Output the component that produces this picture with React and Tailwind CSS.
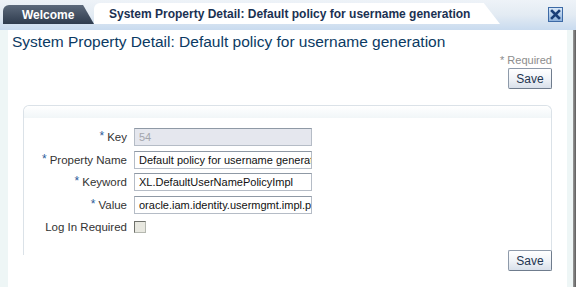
import React from "react";

const font = { fontFamily: "'Liberation Sans', Arial, sans-serif" };

const Req = () => <span className="text-[#2c5c9a] mr-[3px] text-[12px] relative top-[-1px]">*</span>;

const SaveButton = () => (
  <button className="w-[44px] h-[21px] border border-[#8e9aaa] border-b-[#6f7c8d] border-r-[#6f7c8d] rounded-[2px] bg-gradient-to-b from-[#ffffff] via-[#f1f4f8] to-[#d9e0ea] text-[12px] text-[#1f3550] leading-none">
    Save
  </button>
);

const Row = ({ label, required, children }) => (
  <div className="flex items-center h-[22.5px]">
    <div className="w-[122px] text-right text-[11.5px] text-[#333] pr-[7px] whitespace-nowrap">
      {required && <Req />}
      {label}
    </div>
    {children}
  </div>
);

const Input = ({ value, disabled }) => (
  <div
    className={`w-[178px] h-[18px] border border-[#b5bcc6] border-t-[#8f99a5] px-[4px] text-[11px] leading-[16px] whitespace-nowrap overflow-hidden ${
      disabled ? "bg-[#e5e7ee] text-[#a3a6ad]" : "bg-white text-[#111]"
    }`}
  >
    {value}
  </div>
);

export default function App() {
  return (
    <div className="w-[576px] h-[287px] bg-[#eef6f6] overflow-hidden relative" style={font}>
      {/* tab bar */}
      <div className="h-[30px] bg-gradient-to-b from-[#eef3f8] via-[#e3ebf3] to-[#c9dbef] relative">
        <div className="flex items-end h-[24px] ml-[3px] pt-[3px]">
          <div
            className="h-[19px] w-[91px] bg-gradient-to-b from-[#5d6a7c] to-[#2f3c4e] text-white font-bold text-[12px] flex items-center pl-[19px] whitespace-nowrap"
            style={{ clipPath: "polygon(0 0, 88% 0, 100% 100%, 0 100%)", borderTopLeftRadius: 6 }}
          >
            Welcome
          </div>
          <div
            className="h-[21px] w-[406px] bg-white text-[#1b3152] font-bold text-[12px] flex items-center pl-[15px] whitespace-nowrap"
            style={{ clipPath: "polygon(0 0, 96% 0, 100% 100%, 0 100%)", borderTopLeftRadius: 6 }}
          >
            System Property Detail: Default policy for username generation
          </div>
        </div>
        <div className="absolute right-[13px] top-[7px] w-[15px] h-[15px] border border-[#3d6aa6] bg-gradient-to-b from-[#d9e8f8] to-[#8fb2dc] flex items-center justify-center">
          <svg width="11" height="11" viewBox="0 0 11 11">
            <path d="M2 2 L9 9 M9 2 L2 9" stroke="#1a3e78" strokeWidth="2.6" strokeLinecap="square" />
          </svg>
        </div>
      </div>

      {/* content */}
      <div className="flex h-[257px]">
        <div className="w-[8px] shrink-0" />
        <div className="w-[559px] bg-white h-[257px] px-[4px] relative">
          <div className="text-[15.5px] text-[#0b3a63] pt-[2px] leading-[20px] whitespace-nowrap">
            System Property Detail: Default policy for username generation
          </div>
          <div className="flex flex-col items-end pr-[11px] mt-[2px]">
            <div className="text-[11px] text-[#8d8d8d] leading-[13px] mb-[1px]">* Required</div>
            <SaveButton />
          </div>
          <div className="ml-[11px] mr-[11px] mt-[16px] border border-[#dbe2e8] border-b-0 rounded-t-[6px] h-[150px]">
            <div className="h-[12px] rounded-t-[6px] bg-gradient-to-b from-[#ffffff] to-[#f1f6f8]" />
            <div className="pt-[8px] -ml-[12px]">
              <Row label="Key" required>
                <Input value="54" disabled />
              </Row>
              <Row label="Property Name" required>
                <Input value="Default policy for username generation" />
              </Row>
              <Row label="Keyword" required>
                <Input value="XL.DefaultUserNamePolicyImpl" />
              </Row>
              <Row label="Value" required>
                <Input value="oracle.iam.identity.usermgmt.impl.plugins.DefaultComboPolicy" />
              </Row>
              <Row label="Log In Required">
                <div className="w-[12px] h-[12px] border border-[#b5b8b0] border-t-[#6f716b] border-l-[#6f716b] bg-[#e8e8e0]" />
              </Row>
            </div>
          </div>
          <div className="flex justify-end pr-[11px] -mt-[5px]">
            <SaveButton />
          </div>
        </div>
        <div className="w-[6px] shrink-0" />
        <div className="w-[3px] bg-gradient-to-r from-[#9a9a9a] to-[#5c5c5c] h-[257px]" />
      </div>
    </div>
  );
}
